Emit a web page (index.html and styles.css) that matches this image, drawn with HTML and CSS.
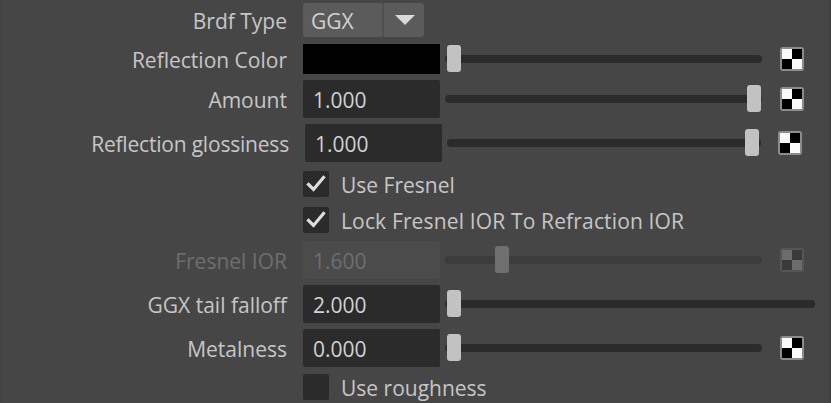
FILE: index.html
```html
<!DOCTYPE html>
<html>
<head>
<meta charset="utf-8">
<link rel="stylesheet" href="styles.css">
</head>
<body>
<div class="panel">
  <div class="row r1">
    <div class="label">Brdf Type</div>
    <div class="dropdown">
      <span class="dd-value">GGX</span>
      <span class="dd-arrow"><svg width="20" height="10" viewBox="0 0 20 10"><polygon points="0,0 20,0 10,10" fill="#d9d9d9"/></svg></span>
    </div>
  </div>

  <div class="row r2">
    <div class="label">Reflection Color</div>
    <div class="swatch"></div>
    <div class="slider"><div class="track"></div><div class="handle" style="left:2px"></div></div>
    <div class="checker"><i class="w"></i><i class="b"></i><i class="b"></i><i class="w"></i></div>
  </div>

  <div class="row r3">
    <div class="label">Amount</div>
    <div class="field">1.000</div>
    <div class="slider"><div class="track"></div><div class="handle" style="left:302px"></div></div>
    <div class="checker"><i class="w"></i><i class="b"></i><i class="b"></i><i class="w"></i></div>
  </div>

  <div class="row r4 wide">
    <div class="label tight">Reflection glossiness</div>
    <div class="field">1.000</div>
    <div class="slider"><div class="track"></div><div class="handle" style="left:298px"></div></div>
    <div class="checker"><i class="w"></i><i class="b"></i><i class="b"></i><i class="w"></i></div>
  </div>

  <div class="row check-row r5">
    <div class="checkbox"><svg width="26" height="26" viewBox="0 0 26 26"><path d="M5.5 13.5 L10.5 18.5 L20.5 6.5" fill="none" stroke="#dedede" stroke-width="3.2" stroke-linecap="square" stroke-linejoin="miter"/></svg></div>
    <span class="check-label">Use Fresnel</span>
  </div>

  <div class="row check-row r6">
    <div class="checkbox"><svg width="26" height="26" viewBox="0 0 26 26"><path d="M5.5 13.5 L10.5 18.5 L20.5 6.5" fill="none" stroke="#dedede" stroke-width="3.2" stroke-linecap="square" stroke-linejoin="miter"/></svg></div>
    <span class="check-label wider">Lock Fresnel IOR To Refraction IOR</span>
  </div>

  <div class="row r7 disabled">
    <div class="label">Fresnel IOR</div>
    <div class="field">1.600</div>
    <div class="slider"><div class="track"></div><div class="handle" style="left:50px"></div></div>
    <div class="checker"><i class="w"></i><i class="b"></i><i class="b"></i><i class="w"></i></div>
  </div>

  <div class="row r8">
    <div class="label">GGX tail falloff</div>
    <div class="field">2.000</div>
    <div class="slider long"><div class="track"></div><div class="handle" style="left:2px"></div></div>
  </div>

  <div class="row r9">
    <div class="label">Metalness</div>
    <div class="field">0.000</div>
    <div class="slider"><div class="track"></div><div class="handle" style="left:2px"></div></div>
    <div class="checker"><i class="w"></i><i class="b"></i><i class="b"></i><i class="w"></i></div>
  </div>

  <div class="row check-row r10">
    <div class="checkbox"></div>
    <span class="check-label">Use roughness</span>
  </div>
</div>
</body>
</html>
```

FILE: styles.css
```css
html, body {
  margin: 0;
  padding: 0;
  background: #464646;
}
body {
  width: 831px;
  height: 403px;
  overflow: hidden;
  font-family: "Open Sans", "Noto Sans", sans-serif;
  font-size: 21px;
  color: #c6c6c6;
}
.panel {
  width: 831px;
  height: 403px;
  box-sizing: border-box;
  border-left: 1px solid #414141;
  border-right: 2px solid #3f3f3f;
  display: flex;
  flex-direction: column;
}
.row {
  display: flex;
  align-items: center;
  flex: none;
}
.label {
  width: 286px;
  text-align: right;
  margin-right: 16px;
  padding-top: 2px;
  white-space: nowrap;
}
.wide .label { width: 288px; }
.label.tight { letter-spacing: -0.2px; }

.r1 { margin-top: 3px; height: 34px; }
.r2 { margin-top: 7px; height: 30px; }
.r3 { margin-top: 6px; height: 38px; }
.r4 { margin-top: 6px; height: 38px; }
.r5 { margin-top: 9px; height: 26px; }
.r6 { margin-top: 10px; height: 26px; }
.r7 { margin-top: 8px; height: 38px; }
.r8 { margin-top: 6px; height: 38px; }
.r9 { margin-top: 6px; height: 38px; }
.r10 { margin-top: 7px; height: 26px; }

.dropdown {
  display: flex;
  height: 34px;
  width: 121px;
  background: #5b5b5b;
  border-radius: 3px;
  overflow: hidden;
}
.dd-value {
  width: 81px;
  padding-left: 8px;
  padding-top: 1px;
  box-sizing: border-box;
  line-height: 34px;
  color: #d2d2d2;
  border-right: 2px solid #4f4f4f;
}
.dd-arrow {
  flex: 1;
  display: flex;
  align-items: center;
  justify-content: center;
  padding-left: 2px;
}

.swatch {
  width: 137px;
  height: 30px;
  background: #000;
}
.field {
  width: 137px;
  height: 38px;
  box-sizing: border-box;
  padding-left: 10px;
  padding-top: 2px;
  line-height: 36px;
  background: #2b2b2b;
  border-radius: 2px;
  color: #d2d2d2;
}

.slider {
  position: relative;
  width: 317px;
  height: 28px;
  margin-left: 5px;
  display: flex;
  align-items: center;
}
.wide .slider { width: 314px; }
.slider.long { width: 370px; }
.track {
  width: 100%;
  height: 8px;
  background: #2b2b2b;
  border-radius: 4px;
}
.handle {
  position: absolute;
  top: 0;
  width: 14px;
  height: 27px;
  background: #c2c2c2;
  border-radius: 3px;
}

.checker {
  margin-left: 18px;
  width: 24px;
  height: 24px;
  box-sizing: border-box;
  padding: 2px;
  background: #8c8c8c;
  border-radius: 3px;
  box-shadow: 0 0 1px 0 #5a5a5a;
  display: grid;
  grid-template-columns: 10px 10px;
  grid-template-rows: 10px 10px;
}
.wide .checker { margin-left: 17px; }
.checker .w { background: #fafafa; }
.checker .b { background: #000; }

.check-row { padding-left: 302px; }
.checkbox {
  width: 26px;
  height: 26px;
  background: #2b2b2b;
  border-radius: 2px;
}
.checkbox svg { display: block; }
.check-label {
  margin-left: 12px;
  padding-top: 1px;
  white-space: nowrap;
}
.check-label.wider { letter-spacing: 0.15px; }

.disabled .label { color: #6e6e6e; }
.disabled .field { background: #4b4b4b; color: #6e6e6e; }
.disabled .track { background: #3c3c3c; }
.disabled .handle { background: #6f6f6f; }
.disabled .checker { background: #555; box-shadow: none; }
.disabled .checker .w { background: #6c6c6c; }
.disabled .checker .b { background: #3a3a3a; }
```
